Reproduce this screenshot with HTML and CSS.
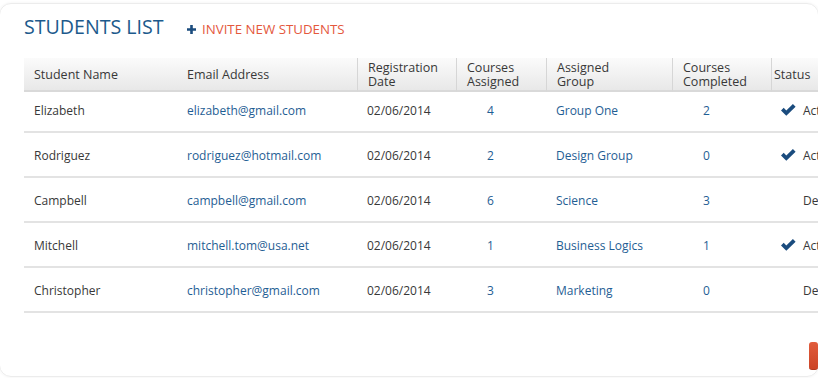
FILE: index.html
```html
<!DOCTYPE html>
<html lang="en">
<head>
    <meta charset="UTF-8">
    <meta name="viewport" content="width=device-width, initial-scale=1.0">
    <title>Students List</title>
    <link rel="stylesheet" href="styles.css">
</head>
<body>
    <div class="panel">
        <div class="panel-head">
            <h1>STUDENTS LIST</h1>
            <a href="#" class="invite-link">
                <svg class="plus-icon" width="9" height="9" viewBox="0 0 9 9"><path d="M3.2 0h2.6v3.2H9v2.6H5.8V9H3.2V5.8H0V3.2h3.2z" fill="#1b4c7e"/></svg>
                INVITE NEW STUDENTS
            </a>
        </div>

        <table class="students">
            <colgroup>
                <col style="width:153px">
                <col style="width:180px">
                <col style="width:99px">
                <col style="width:90px">
                <col style="width:126px">
                <col style="width:99px">
                <col>
            </colgroup>
            <thead>
                <tr>
                    <th>Student Name</th>
                    <th>Email Address</th>
                    <th class="sep">Registration<br>Date</th>
                    <th class="sep">Courses<br>Assigned</th>
                    <th class="sep">Assigned<br>Group</th>
                    <th class="sep">Courses<br>Completed</th>
                    <th class="sep status-head">Status</th>
                </tr>
            </thead>
            <tbody>
                <tr>
                    <td>Elizabeth</td>
                    <td><a href="#">elizabeth@gmail.com</a></td>
                    <td>02/06/2014</td>
                    <td class="num"><a href="#">4</a></td>
                    <td><a href="#">Group One</a></td>
                    <td class="num"><a href="#">2</a></td>
                    <td class="status"><span class="check"><svg width="15" height="12" viewBox="0 0 15 12"><polygon points="0,6.4 2.7,3.8 5.3,6.4 11.9,0 14.6,2.7 5.3,11.8" fill="#1b4c7e"/></svg></span>Active</td>
                </tr>
                <tr>
                    <td>Rodriguez</td>
                    <td><a href="#">rodriguez@hotmail.com</a></td>
                    <td>02/06/2014</td>
                    <td class="num"><a href="#">2</a></td>
                    <td><a href="#">Design Group</a></td>
                    <td class="num"><a href="#">0</a></td>
                    <td class="status"><span class="check"><svg width="15" height="12" viewBox="0 0 15 12"><polygon points="0,6.4 2.7,3.8 5.3,6.4 11.9,0 14.6,2.7 5.3,11.8" fill="#1b4c7e"/></svg></span>Active</td>
                </tr>
                <tr>
                    <td>Campbell</td>
                    <td><a href="#">campbell@gmail.com</a></td>
                    <td>02/06/2014</td>
                    <td class="num"><a href="#">6</a></td>
                    <td><a href="#">Science</a></td>
                    <td class="num"><a href="#">3</a></td>
                    <td class="status"><span class="check"></span>Deactive</td>
                </tr>
                <tr>
                    <td>Mitchell</td>
                    <td><a href="#">mitchell.tom@usa.net</a></td>
                    <td>02/06/2014</td>
                    <td class="num"><a href="#">1</a></td>
                    <td><a href="#">Business Logics</a></td>
                    <td class="num"><a href="#">1</a></td>
                    <td class="status"><span class="check"><svg width="15" height="12" viewBox="0 0 15 12"><polygon points="0,6.4 2.7,3.8 5.3,6.4 11.9,0 14.6,2.7 5.3,11.8" fill="#1b4c7e"/></svg></span>Active</td>
                </tr>
                <tr>
                    <td>Christopher</td>
                    <td><a href="#">christopher@gmail.com</a></td>
                    <td>02/06/2014</td>
                    <td class="num"><a href="#">3</a></td>
                    <td><a href="#">Marketing</a></td>
                    <td class="num"><a href="#">0</a></td>
                    <td class="status"><span class="check"></span>Deactive</td>
                </tr>
            </tbody>
        </table>

        <div class="panel-foot">
            <button type="button" class="btn-save">Save</button>
        </div>
    </div>
</body>
</html>
```

FILE: styles.css
```css
:root {
    --blue: #1c5a8c;
    --link: #1f5e94;
    --orange: #e4583d;
    --text: #383838;
    --line: #e3e3e3;
}

* {
    margin: 0;
    padding: 0;
    box-sizing: border-box;
}

body {
    font-family: 'Open Sans', 'Liberation Sans', sans-serif;
    background-color: #fff;
    color: var(--text);
    overflow: hidden;
    height: 378px;
}

.panel {
    width: 820px;
    height: 374px;
    margin: 3px 0 0 -1px;
    padding: 11px 0 0 24px;
    border: 1px solid #ececec;
    border-radius: 12px;
    box-shadow: 0 0 3px rgba(0, 0, 0, 0.06);
}

.panel-head {
    display: flex;
    align-items: baseline;
    margin-bottom: 19px;
}

.panel-head h1 {
    font-size: 19.6px;
    line-height: 24px;
    font-weight: 400;
    color: var(--blue);
    margin-right: 23px;
}

.invite-link {
    font-size: 13.3px;
    color: var(--orange);
    text-decoration: none;
}

.plus-icon {
    margin-right: 3px;
    vertical-align: 0;
}

.students {
    width: 900px;
    table-layout: fixed;
    border-collapse: separate;
    border-spacing: 0;
    font-size: 12px;
}

.students th {
    height: 34px;
    padding: 1px 10px 0;
    font-size: 12.5px;
    font-weight: 400;
    line-height: 14px;
    text-align: left;
    vertical-align: middle;
    color: var(--text);
    background: linear-gradient(#fbfbfb, #e8e8e8);
    border-bottom: 2px solid #d9d9d9;
}

.students th.sep {
    border-left: 1px solid #d6d6d6;
}

.students th.status-head {
    padding-left: 2px;
}

.students td {
    padding: 14px 10px 11px;
    line-height: 18px;
    border-bottom: 2px solid var(--line);
    white-space: nowrap;
}

.students tbody tr:first-child td {
    padding-top: 10px;
}

.students td a {
    color: var(--link);
    text-decoration: none;
}

.students td.num {
    padding-left: 31px;
}

.check {
    display: inline-block;
    width: 16px;
    height: 12px;
    line-height: 12px;
    margin-right: 6px;
    vertical-align: -1px;
}

.panel-foot {
    display: flex;
    margin-top: 29px;
}

.btn-save {
    margin-left: 785px;
    width: 40px;
    height: 28px;
    border: none;
    border-bottom: 1px solid #b03a20;
    border-radius: 3px;
    background: linear-gradient(#e15c3c, #cc4527);
    color: #fff;
    font-family: inherit;
    font-size: 13px;
    text-indent: 20px;
    overflow: hidden;
}
```
